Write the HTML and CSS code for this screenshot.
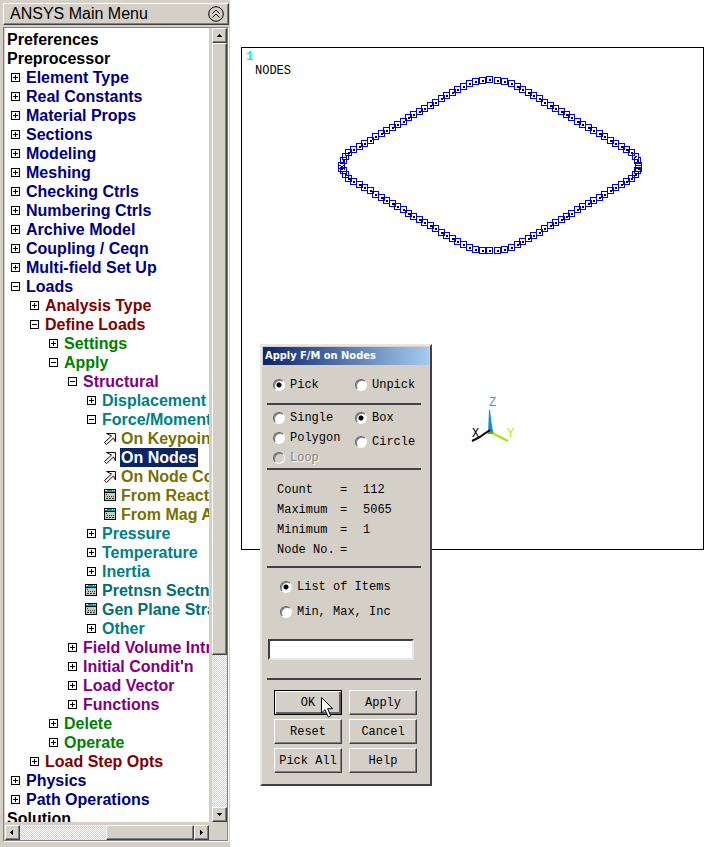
FILE: index.html
```
<!DOCTYPE html>
<html lang="en">
<head>
<meta charset="utf-8">
<title>ANSYS</title>
<link rel="stylesheet" href="styles.css">
</head>
<body>
<svg class="defs" aria-hidden="true">
  <symbol id="pick" viewBox="0 0 13 13">
    <path d="M2.500 1.500h9v8.500L9.500 6 2.500 12.500.5 10.500 7.500 4z" fill="#fff0ee" stroke="#1a0a14"/>
  </symbol>
  <symbol id="form" viewBox="0 0 13 13" shape-rendering="crispEdges">
    <path d="M0 0h12v12H0z" fill="#000"/>
    <path d="M1 1h10v2H1z" fill="#00a0a8"/>
    <path d="M1 1h2v1H1zM8 1h1v1H8zM10 1h1v1h-1z" fill="#c8ffff"/>
    <path d="M1 4h10v7H1z" fill="#c8c8c8"/>
    <path d="M2 5h1v1H2zM3 7h1v1H3zM5 7h1v1H5zM7 7h1v1H7zM2 9h2v1H2zM5 9h2v1H5zM8 9h2v1H8zM9 7h1v1H9z" fill="#303030"/>
  </symbol>
</svg>

<aside class="panel">
  <header class="panel-title">
    <h1>ANSYS Main Menu</h1>
    <button class="collapse" aria-label="Collapse menu">
      <svg viewBox="0 0 16 16" width="16" height="16"><circle cx="8" cy="8" r="7.300"/><path d="M4.500 7.500 8 4l3.500 3.500M4.500 11.500 8 8l3.500 3.500"/></svg>
    </button>
  </header>
  <div class="tree-frame">
    <nav class="tree" aria-label="Main menu">
      <ul>
        <li><a href="#">Preferences</a></li>
        <li><a href="#">Preprocessor</a>
          <ul class="navy">
            <li><button class="toggle" aria-label="Expand"></button><a href="#">Element Type</a></li>
            <li><button class="toggle" aria-label="Expand"></button><a href="#">Real Constants</a></li>
            <li><button class="toggle" aria-label="Expand"></button><a href="#">Material Props</a></li>
            <li><button class="toggle" aria-label="Expand"></button><a href="#">Sections</a></li>
            <li><button class="toggle" aria-label="Expand"></button><a href="#">Modeling</a></li>
            <li><button class="toggle" aria-label="Expand"></button><a href="#">Meshing</a></li>
            <li><button class="toggle" aria-label="Expand"></button><a href="#">Checking Ctrls</a></li>
            <li><button class="toggle" aria-label="Expand"></button><a href="#">Numbering Ctrls</a></li>
            <li><button class="toggle" aria-label="Expand"></button><a href="#">Archive Model</a></li>
            <li><button class="toggle" aria-label="Expand"></button><a href="#">Coupling / Ceqn</a></li>
            <li><button class="toggle" aria-label="Expand"></button><a href="#">Multi-field Set Up</a></li>
            <li><button class="toggle open" aria-label="Collapse"></button><a href="#">Loads</a>
              <ul class="maroon">
                <li><button class="toggle" aria-label="Expand"></button><a href="#">Analysis Type</a></li>
                <li><button class="toggle open" aria-label="Collapse"></button><a href="#">Define Loads</a>
                  <ul class="green">
                    <li><button class="toggle" aria-label="Expand"></button><a href="#">Settings</a></li>
                    <li><button class="toggle open" aria-label="Collapse"></button><a href="#">Apply</a>
                      <ul class="purple">
                        <li><button class="toggle open" aria-label="Collapse"></button><a href="#">Structural</a>
                          <ul class="teal">
                            <li><button class="toggle" aria-label="Expand"></button><a href="#">Displacement</a></li>
                            <li><button class="toggle open" aria-label="Collapse"></button><a href="#">Force/Moment</a>
                              <ul class="olive">
                                <li><svg class="icon"><use href="#pick"/></svg><a href="#">On Keypoints</a></li>
                                <li><svg class="icon"><use href="#pick"/></svg><a href="#" class="selected">On Nodes</a></li>
                                <li><svg class="icon"><use href="#pick"/></svg><a href="#">On Node Components</a></li>
                                <li><svg class="icon"><use href="#form"/></svg><a href="#">From Reactions</a></li>
                                <li><svg class="icon"><use href="#form"/></svg><a href="#">From Mag Analy</a></li>
                              </ul>
                            </li>
                            <li><button class="toggle" aria-label="Expand"></button><a href="#">Pressure</a></li>
                            <li><button class="toggle" aria-label="Expand"></button><a href="#">Temperature</a></li>
                            <li><button class="toggle" aria-label="Expand"></button><a href="#">Inertia</a></li>
                            <li class="deep"><svg class="icon"><use href="#form"/></svg><a href="#">Pretnsn Sectn</a></li>
                            <li class="deep"><svg class="icon"><use href="#form"/></svg><a href="#">Gen Plane Strain</a></li>
                            <li><button class="toggle" aria-label="Expand"></button><a href="#">Other</a></li>
                          </ul>
                        </li>
                        <li><button class="toggle" aria-label="Expand"></button><a href="#">Field Volume Intr</a></li>
                        <li><button class="toggle" aria-label="Expand"></button><a href="#">Initial Condit'n</a></li>
                        <li><button class="toggle" aria-label="Expand"></button><a href="#">Load Vector</a></li>
                        <li><button class="toggle" aria-label="Expand"></button><a href="#">Functions</a></li>
                      </ul>
                    </li>
                    <li><button class="toggle" aria-label="Expand"></button><a href="#">Delete</a></li>
                    <li><button class="toggle" aria-label="Expand"></button><a href="#">Operate</a></li>
                  </ul>
                </li>
                <li><button class="toggle" aria-label="Expand"></button><a href="#">Load Step Opts</a></li>
              </ul>
            </li>
            <li><button class="toggle" aria-label="Expand"></button><a href="#">Physics</a></li>
            <li><button class="toggle" aria-label="Expand"></button><a href="#">Path Operations</a></li>
          </ul>
        </li>
        <li><a href="#">Solution</a></li>
      </ul>
    </nav>
    <div class="scroll vertical">
      <button class="raised" aria-label="Scroll up"><svg viewBox="0 0 7 4"><path d="M3 0h1v1h1v1h1v1H1V2h1V1h1z"/></svg></button>
      <div class="thumb raised"></div>
      <div class="track"></div>
      <button class="raised" aria-label="Scroll down"><svg viewBox="0 0 7 4"><path d="M1 0h5v1H5v1H4v1H3V2H2V1H1z"/></svg></button>
    </div>
    <div class="scroll horizontal">
      <button class="raised" aria-label="Scroll left"><svg viewBox="0 0 7 7"><path d="M4 1v5H3V5H2V4H1V3h1V2h1V1z"/></svg></button>
      <div class="track"></div>
      <div class="thumb raised"></div>
      <button class="raised" aria-label="Scroll right"><svg viewBox="0 0 7 7"><path d="M2 1v5h1V5h1V4h1V3H4V2H3V1z"/></svg></button>
    </div>
  </div>
</aside>

<main class="workspace">
  <section class="plot" aria-label="Node plot">
    <svg viewBox="242 48 461 501">
      <defs>
        <marker id="node" markerUnits="userSpaceOnUse" markerWidth="10" markerHeight="10" refX="5" refY="5" viewBox="0 0 10 10">
          <path d="M2 2h6v6H2z" fill="none" stroke="#0000f0" shape-rendering="crispEdges"/>
          <path d="M4.500 4.500h2v2h-2z" fill="#000" shape-rendering="crispEdges"/>
        </marker>
      </defs>
      <text x="246" y="60" class="window-no">1</text>
      <text x="255" y="74" class="caption">NODES</text>
      <g class="nodes" transform="translate(.5 .5)">
        <polyline points="341,165 343,160 345,156 348,152 353,149 359,146 364,143 370,140 375,136 381,133 386,130 392,127 397,124 403,121 408,117 413,114 419,111 424,108 430,105 435,102 441,98 446,95 452,92 457,89 463,86 469,83 475,81 482,80 489,79 497,80 504,81 511,83 517,86 522,89 528,92 533,95 539,98 544,102 550,105 555,108 561,111 566,114 571,117 577,121 582,124 588,127 593,130 599,133 604,136 610,140 615,143 621,146 626,149 631,152 635,156 637,160 638,165"/>
        <polyline points="341,168 343,170 345,174 348,178 353,181 359,184 364,187 370,190 375,194 381,197 386,200 392,203 397,206 403,209 408,213 413,216 419,219 424,222 430,225 435,228 441,232 446,235 452,238 457,241 463,244 469,247 475,249 482,250 489,250 497,250 504,249 511,247 517,244 522,241 528,238 533,235 539,232 544,228 550,225 555,222 561,219 566,216 571,213 577,209 582,206 588,203 593,200 599,197 604,194 610,190 615,187 621,184 626,181 631,178 635,174 637,170 638,168"/>
      </g>
      <path d="M344 156h2v1h-2zM341 165h2v1h-2zM343 170h2v1h-2zM636 157h2v1h-2zM638 166h2v1h-2zM637 170h2v1h-2z" fill="#ff0"/>
      <path d="M489 410h1l1 9 1 7 1 5 1 2-4 1h-2z" fill="#0a90d8"/>
      <path d="M487 433h5l6 3 10 5" fill="none" stroke="#a0e800" stroke-width="2"/>
      <path d="M488 433h5" stroke="#80a000" stroke-width="2"/>
      <path d="M490 430l-6 4-4 3-8 4" fill="none" stroke="#000" stroke-width="2"/>
      <text x="489" y="406" class="axis-z">Z</text>
      <text x="472" y="437" class="axis-x">X</text>
      <text x="507" y="437" class="axis-y">Y</text>
    </svg>
  </section>

  <form class="dialog" aria-labelledby="dialog-title">
    <h2 id="dialog-title">Apply F/M on Nodes</h2>
    <div class="group columns mode">
      <label><input type="radio" name="mode" checked>Pick</label>
      <label><input type="radio" name="mode">Unpick</label>
    </div>
    <div class="group columns shape">
      <div class="stack">
        <label><input type="radio" name="shape">Single</label>
        <label><input type="radio" name="shape">Polygon</label>
        <label class="disabled"><input type="radio" name="shape" disabled>Loop</label>
      </div>
      <div class="stack loose">
        <label><input type="radio" name="shape" checked>Box</label>
        <label><input type="radio" name="shape">Circle</label>
      </div>
    </div>
    <div class="group counts">
      <table>
        <tr><th scope="row">Count</th><td>=</td><td>112</td></tr>
        <tr><th scope="row">Maximum</th><td>=</td><td>5065</td></tr>
        <tr><th scope="row">Minimum</th><td>=</td><td>1</td></tr>
        <tr><th scope="row">Node No.</th><td>=</td><td></td></tr>
      </table>
    </div>
    <div class="group entry">
      <label><input type="radio" name="entry" checked>List of Items</label>
      <label><input type="radio" name="entry">Min, Max, Inc</label>
      <input type="text" class="field" aria-label="Items">
    </div>
    <div class="actions">
      <div class="default">
        <button type="button">OK</button>
        <svg class="cursor" viewBox="0 0 13 21" width="13" height="21"><path d="M.5.5v15.500l3.500-3.300 3.200 7.300 2.600-1.100-3.200-7.200h5z" fill="#fff" stroke="#000"/></svg>
      </div>
      <button type="button">Apply</button>
      <button type="button">Reset</button>
      <button type="button">Cancel</button>
      <button type="button">Pick All</button>
      <button type="button">Help</button>
    </div>
  </form>
</main>
</body>
</html>
```
FILE: styles.css
```
* {
  box-sizing: border-box;
}

body {
  display: flex;
  height: 100vh;
  margin: 0;
  background: #fff;
  color: #000;
  font-family: "Liberation Sans", Arial, sans-serif;
  font-size: 16px;
}

button {
  padding: 0;
  border: 0;
  background: none;
  color: inherit;
  font: inherit;
}

.defs {
  position: absolute;
  width: 0;
  height: 0;
}

/* Menu panel */

.panel {
  display: flex;
  flex: none;
  flex-direction: column;
  gap: 2px;
  width: 230px;
  padding: 3px 1px 5px 3px;
  background: #d4d0c8;
}

.panel-title {
  display: flex;
  flex: none;
  align-items: center;
  justify-content: space-between;
  height: 22px;
  padding: 0 4px 0 6px;
  border: 1px solid;
  border-color: #fff #404040 #404040 #fff;
  box-shadow: inset -1px -1px #808080;
}

.panel-title h1 {
  margin: 0;
  font-size: 16px;
  font-weight: normal;
}

.collapse svg {
  display: block;
  fill: none;
  stroke: #000;
}

.tree-frame {
  display: grid;
  flex: 1;
  grid-template: minmax(0, 1fr) 15px / minmax(0, 1fr) 15px;
  gap: 3px;
  min-height: 0;
  border: 1px solid;
  border-color: #808080 #fff #fff #808080;
  box-shadow: inset -1px -1px #808080;
  padding: 0 1px 1px;
}

.tree {
  overflow: hidden;
  padding: 2px 0 0 1px;
  background: #fff;
  font-weight: bold;
  line-height: 19px;
  white-space: nowrap;
}

.tree ul {
  margin: 0;
  padding: 0;
  list-style: none;
}

.tree ul ul ul {
  padding-left: 19px;
}

.tree a {
  display: inline-block;
  height: 19px;
  padding: 0 1px;
  color: inherit;
  text-decoration: none;
  vertical-align: top;
}

.tree a.selected {
  background: #0a246a;
  color: #fff;
}

.navy { color: #000080; }
.maroon { color: #800000; }
.green { color: #008000; }
.purple { color: #800080; }
.teal { color: #008080; }
.deep { color: #007070; }
.olive { color: #787000; }

.toggle {
  width: 9px;
  height: 9px;
  margin: 5px;
  border: 1px solid #000;
  background:
    linear-gradient(#000, #000) center / 5px 1px no-repeat,
    linear-gradient(#000, #000) center / 1px 5px no-repeat;
  vertical-align: top;
}

.toggle.open {
  background: linear-gradient(#000, #000) center / 5px 1px no-repeat;
}

.icon {
  width: 13px;
  height: 13px;
  margin: 3px;
  vertical-align: top;
}

/* Scroll bars */

.raised {
  display: flex;
  flex: none;
  align-items: center;
  justify-content: center;
  border: 1px solid;
  border-color: #fff #404040 #404040 #fff;
  background: #d4d0c8;
  box-shadow: inset -1px -1px #808080;
}

.scroll {
  display: flex;
}

.scroll button {
  width: 15px;
  height: 15px;
}

.scroll svg {
  width: 7px;
}

.vertical {
  flex-direction: column;
}

.vertical .thumb {
  flex: 80;
}

.vertical .track {
  flex: 20;
}

.horizontal .track,
.horizontal .thumb {
  flex: 1;
}

.track {
  background: repeating-conic-gradient(#fff 0 25%, #d4d0c8 0 50%) 0 0 / 2px 2px;
}

/* Plot window */

.workspace {
  position: relative;
  flex: 1;
  min-width: 0;
  padding: 47px 14px 0 11px;
}

.plot {
  border: 1px solid #000;
}

.plot svg {
  display: block;
  width: 100%;
}

.plot text {
  font-family: "Liberation Mono", "Courier New", monospace;
  font-size: 12px;
}

.nodes {
  fill: none;
}

.nodes polyline {
  marker: url(#node);
}

.plot .window-no {
  fill: #00f0f0;
  font-weight: bold;
}

.axis-z { fill: #20a8f0; }
.axis-y { fill: #a8f000; }

/* Picking dialog */

.dialog {
  position: absolute;
  top: 344px;
  left: 30px;
  width: 172px;
  padding: 1px 1px 11px;
  border: 2px solid;
  border-color: #e8e6e0 #404040 #404040 #e8e6e0;
  background: #d4d0c8;
  font-family: "Liberation Mono", "Courier New", monospace;
  font-size: 12px;
  line-height: 20px;
}

.dialog h2 {
  margin: 0;
  padding-left: 2px;
  background: linear-gradient(90deg, #0a246a, #a6caf0);
  color: #fff;
  font: bold 11px/18px "DejaVu Sans Condensed", "DejaVu Sans", sans-serif;
  white-space: nowrap;
}

.group {
  margin: 0 8px 0 4px;
  border-bottom: 2px solid #404040;
}

.group label {
  display: flex;
  align-items: center;
  gap: 5px;
}

.columns {
  display: grid;
  grid-template-columns: 82px 1fr;
  padding-left: 6px;
}

.mode {
  padding-top: 10px;
  padding-bottom: 8px;
}

.shape {
  padding-top: 3px;
}

.stack {
  display: flex;
  flex-direction: column;
}

.loose {
  gap: 4px;
}

.disabled {
  color: #808080;
  text-shadow: 1px 1px #fff;
}

input[type="radio"] {
  flex: none;
  width: 12px;
  height: 12px;
  margin: 0;
  border: 1px solid;
  border-color: #606060 #fff #fff #606060;
  border-radius: 50%;
  appearance: none;
  background: #fff;
  box-shadow: inset 1px 1px #808080;
}

input[type="radio"]:checked {
  background: radial-gradient(circle, #000 2px, #fff 3px);
}

input[type="radio"]:disabled {
  background: #d4d0c8;
}

.counts {
  padding: 10px 0 6px 10px;
}

.counts table {
  border-collapse: collapse;
}

.counts th,
.counts td {
  height: 20px;
  padding: 0;
  font-weight: normal;
  text-align: left;
}

.counts th {
  width: 63px;
}

.counts td {
  width: 23px;
}

.entry {
  display: flex;
  flex-direction: column;
  gap: 5px;
  padding: 9px 0 18px 1px;
}

.entry label {
  padding-left: 12px;
}

.field {
  width: 146px;
  height: 21px;
  margin-top: 12px;
  border: 2px solid;
  border-color: #404040 #e8e6e0 #e8e6e0 #404040;
  background: #fff;
  font: inherit;
}

.actions {
  display: grid;
  grid-template-columns: 68px 68px;
  grid-auto-rows: 25px;
  gap: 4px 7px;
  padding: 10px 0 0 11px;
}

.actions button {
  width: 100%;
  height: 25px;
  border: 1px solid;
  border-color: #fff #404040 #404040 #fff;
  box-shadow: inset -1px -1px #808080;
}

.default {
  position: relative;
}

.default .cursor {
  position: absolute;
  top: 7px;
  left: 47px;
}

.default button {
  border-color: #000;
  box-shadow: inset 1px 1px #fff, inset -2px -2px #606060;
}
```
